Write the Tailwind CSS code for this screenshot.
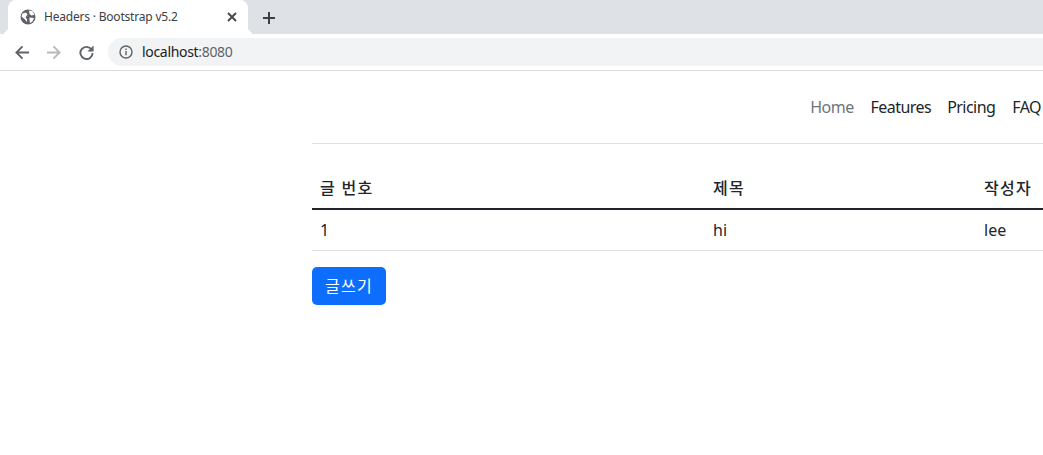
<!DOCTYPE html>
<html lang="ko">
<head>
    <meta charset="UTF-8">
    <title>Headers · Bootstrap v5.2</title>
    <script src="https://cdn.jsdelivr.net/npm/@tailwindcss/browser@4"></script>
</head>
<body class="h-[455px] w-[1043px] overflow-hidden bg-white font-['Noto_Sans','Noto_Sans_CJK_KR',sans-serif] text-[#212529]">
    <!-- browser tabs -->
    <div class="flex h-[34px] items-end bg-[#dee1e6] pl-2">
        <div class="relative flex h-[34px] w-[240px] items-center rounded-t-lg bg-white pl-3 pr-[11px] before:absolute before:bottom-0 before:-left-2 before:h-2 before:w-2 before:rounded-br-lg before:shadow-[4px_4px_0_#fff] before:content-[''] after:absolute after:bottom-0 after:-right-2 after:h-2 after:w-2 after:rounded-bl-lg after:shadow-[-4px_4px_0_#fff] after:content-['']">
            <svg class="h-4 w-4 shrink-0" viewBox="0 0 16 16"><circle cx="8" cy="8" r="7.500" fill="#5f6368"/><path d="M2.500 4.500 6 3.500l1.500 2L5.500 8.500 7 10v3L5 10.500 1.500 7.500zM9 1.500l3.500.8 2 3.500-3 .7L9.500 5zM9.500 8.500l4.500.5-1.500 3.500-2.500 1.500-.5-3z" fill="#fff"/></svg>
            <span class="ml-2 flex-1 font-['Noto_Sans',sans-serif] text-xs tracking-[-0.2px] text-[#3c4043]">Headers · Bootstrap v5.2</span>
            <svg class="h-2.5 w-2.5" viewBox="0 0 10 10"><path d="M1 1l8 8M9 1l-8 8" stroke="#45484c" stroke-width="1.900"/></svg>
        </div>
        <svg class="mb-[10px] ml-[15px] h-3 w-3" viewBox="0 0 12 12"><path d="M6 0v12M0 6h12" stroke="#3c4043" stroke-width="2"/></svg>
    </div>
    <!-- toolbar -->
    <div class="flex h-[37px] items-center border-b border-[#dadce0] bg-white pl-[15px]">
        <svg class="h-[15px] w-[15px]" viewBox="0 0 16 16"><path d="M15 8H2M8 1.500 1.500 8 8 14.500" fill="none" stroke="#5f6368" stroke-width="2"/></svg>
        <svg class="ml-[16px] h-[15px] w-[15px]" viewBox="0 0 16 16"><path d="M1 8h13M8 1.500 14.500 8 8 14.500" fill="none" stroke="#b8babd" stroke-width="2"/></svg>
        <svg class="ml-[18px] h-[15px] w-[15px]" viewBox="0 0 16 16"><path d="M13.500 5A6.500 6.500 0 1 0 14.500 8.500" fill="none" stroke="#5f6368" stroke-width="2"/><path d="M15.500 .5v6.500H9z" fill="#5f6368"/></svg>
        <div class="ml-[14px] flex h-7 flex-1 items-center rounded-l-full bg-[#f1f3f4] pl-[11px]">
            <svg class="h-[14px] w-[14px]" viewBox="0 0 14 14"><circle cx="7" cy="7" r="6" fill="none" stroke="#5f6368" stroke-width="1.400"/><path d="M7 6v4.300M7 3.500v1.500" stroke="#5f6368" stroke-width="1.400"/></svg>
            <span class="ml-[9px] font-['Noto_Sans',sans-serif] text-sm tracking-[-0.32px] text-[#202124]">localhost<span class="text-[#5f6368]">:8080</span></span>
        </div>
    </div>
    <!-- page -->
    <main class="ml-[312px] w-[731px]">
        <header class="flex h-[73px] items-center justify-end border-b border-[#dee2e6] pb-[1px]">
            <nav class="flex shrink-0 translate-x-[6px] text-base tracking-[-0.55px]">
                <a class="ml-[1px] px-2 text-[#6c757d]" href="#">Home</a>
                <a class="ml-[1px] px-2" href="#">Features</a>
                <a class="px-2" href="#">Pricing</a>
                <a class="ml-[1px] px-2" href="#">FAQ</a>
            </nav>
        </header>
        <table class="mt-6 w-full table-fixed text-left text-base">
            <thead>
                <tr class="border-b-2 border-[#212529]">
                    <th class="w-[393px] p-2 font-medium tracking-[1.3px]">글 번호</th>
                    <th class="w-[271px] p-2 font-medium tracking-[1.3px]">제목</th>
                    <th class="p-2 font-medium tracking-[1.3px]">작성자</th>
                </tr>
            </thead>
            <tbody>
                <tr class="border-b border-[#dee2e6]">
                    <td class="p-2">1</td>
                    <td class="p-2">hi</td>
                    <td class="p-2">lee</td>
                </tr>
            </tbody>
        </table>
        <button class="mt-4 block h-[38px] w-[74px] rounded-[5px] bg-[#0d6efd] text-base tracking-[1.3px] text-white">글쓰기</button>
    </main>
</body>
</html>
